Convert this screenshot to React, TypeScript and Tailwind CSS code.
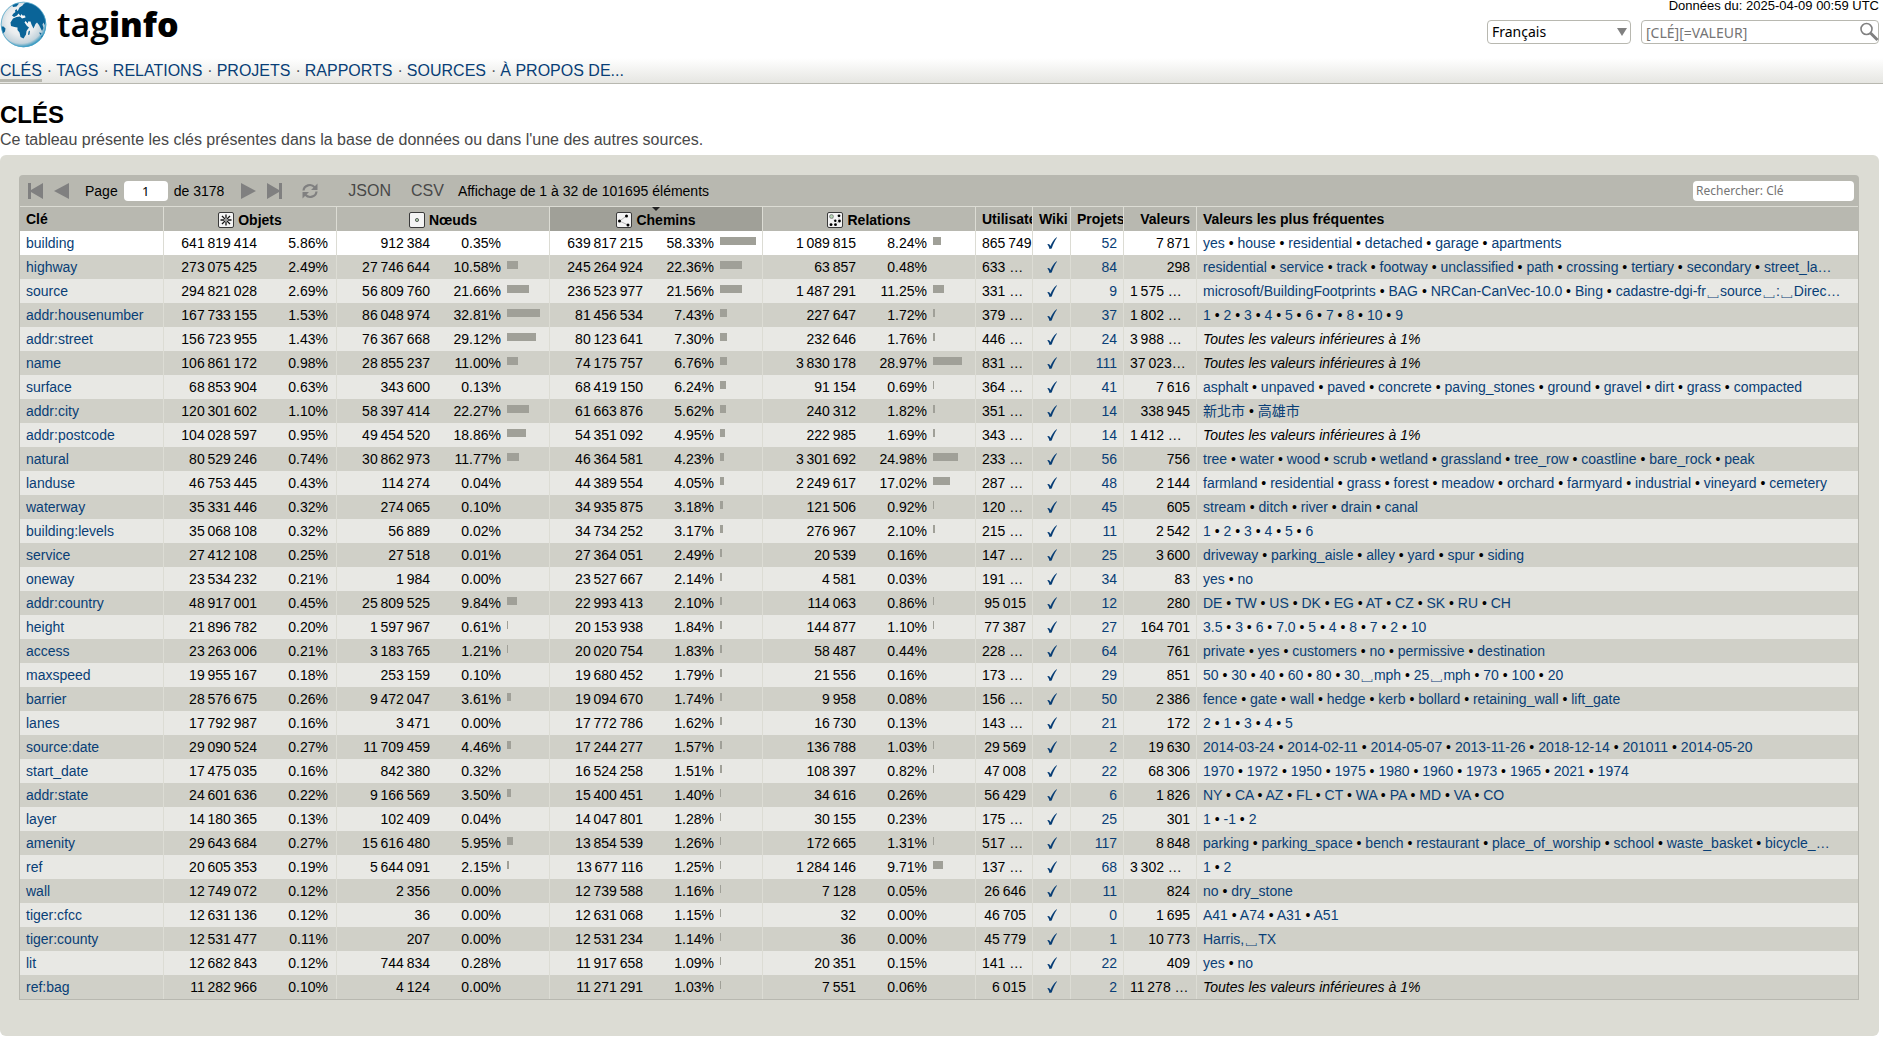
import React from "react";

type Row = {
  key: string;
  all: [string, string];
  nodes: [string, string];
  ways: [string, string];
  relations: [string, string];
  users: string;
  projects: string;
  values: string;
  top: string;
};

const SOURCE = `building|641 819 414|5.86|912 384|0.35|639 817 215|58.33|1 089 815|8.24|865 749|52|7 871|yes,house,residential,detached,garage,apartments
highway|273 075 425|2.49|27 746 644|10.58|245 264 924|22.36|63 857|0.48|633 …|84|298|residential,service,track,footway,unclassified,path,crossing,tertiary,secondary,street_la…
source|294 821 028|2.69|56 809 760|21.66|236 523 977|21.56|1 487 291|11.25|331 …|9|1 575 …|microsoft/BuildingFootprints,BAG,NRCan-CanVec-10.0,Bing,cadastre-dgi-fr␣source␣:␣Direc…
addr:housenumber|167 733 155|1.53|86 048 974|32.81|81 456 534|7.43|227 647|1.72|379 …|37|1 802 …|1,2,3,4,5,6,7,8,10,9
addr:street|156 723 955|1.43|76 367 668|29.12|80 123 641|7.30|232 646|1.76|446 …|24|3 988 …|
name|106 861 172|0.98|28 855 237|11.00|74 175 757|6.76|3 830 178|28.97|831 …|111|37 023…|
surface|68 853 904|0.63|343 600|0.13|68 419 150|6.24|91 154|0.69|364 …|41|7 616|asphalt,unpaved,paved,concrete,paving_stones,ground,gravel,dirt,grass,compacted
addr:city|120 301 602|1.10|58 397 414|22.27|61 663 876|5.62|240 312|1.82|351 …|14|338 945|新北市,高雄市
addr:postcode|104 028 597|0.95|49 454 520|18.86|54 351 092|4.95|222 985|1.69|343 …|14|1 412 …|
natural|80 529 246|0.74|30 862 973|11.77|46 364 581|4.23|3 301 692|24.98|233 …|56|756|tree,water,wood,scrub,wetland,grassland,tree_row,coastline,bare_rock,peak
landuse|46 753 445|0.43|114 274|0.04|44 389 554|4.05|2 249 617|17.02|287 …|48|2 144|farmland,residential,grass,forest,meadow,orchard,farmyard,industrial,vineyard,cemetery
waterway|35 331 446|0.32|274 065|0.10|34 935 875|3.18|121 506|0.92|120 …|45|605|stream,ditch,river,drain,canal
building:levels|35 068 108|0.32|56 889|0.02|34 734 252|3.17|276 967|2.10|215 …|11|2 542|1,2,3,4,5,6
service|27 412 108|0.25|27 518|0.01|27 364 051|2.49|20 539|0.16|147 …|25|3 600|driveway,parking_aisle,alley,yard,spur,siding
oneway|23 534 232|0.21|1 984|0.00|23 527 667|2.14|4 581|0.03|191 …|34|83|yes,no
addr:country|48 917 001|0.45|25 809 525|9.84|22 993 413|2.10|114 063|0.86|95 015|12|280|DE,TW,US,DK,EG,AT,CZ,SK,RU,CH
height|21 896 782|0.20|1 597 967|0.61|20 153 938|1.84|144 877|1.10|77 387|27|164 701|3.5,3,6,7.0,5,4,8,7,2,10
access|23 263 006|0.21|3 183 765|1.21|20 020 754|1.83|58 487|0.44|228 …|64|761|private,yes,customers,no,permissive,destination
maxspeed|19 955 167|0.18|253 159|0.10|19 680 452|1.79|21 556|0.16|173 …|29|851|50,30,40,60,80,30␣mph,25␣mph,70,100,20
barrier|28 576 675|0.26|9 472 047|3.61|19 094 670|1.74|9 958|0.08|156 …|50|2 386|fence,gate,wall,hedge,kerb,bollard,retaining_wall,lift_gate
lanes|17 792 987|0.16|3 471|0.00|17 772 786|1.62|16 730|0.13|143 …|21|172|2,1,3,4,5
source:date|29 090 524|0.27|11 709 459|4.46|17 244 277|1.57|136 788|1.03|29 569|2|19 630|2014-03-24,2014-02-11,2014-05-07,2013-11-26,2018-12-14,201011,2014-05-20
start_date|17 475 035|0.16|842 380|0.32|16 524 258|1.51|108 397|0.82|47 008|22|68 306|1970,1972,1950,1975,1980,1960,1973,1965,2021,1974
addr:state|24 601 636|0.22|9 166 569|3.50|15 400 451|1.40|34 616|0.26|56 429|6|1 826|NY,CA,AZ,FL,CT,WA,PA,MD,VA,CO
layer|14 180 365|0.13|102 409|0.04|14 047 801|1.28|30 155|0.23|175 …|25|301|1,-1,2
amenity|29 643 684|0.27|15 616 480|5.95|13 854 539|1.26|172 665|1.31|517 …|117|8 848|parking,parking_space,bench,restaurant,place_of_worship,school,waste_basket,bicycle_…
ref|20 605 353|0.19|5 644 091|2.15|13 677 116|1.25|1 284 146|9.71|137 …|68|3 302 …|1,2
wall|12 749 072|0.12|2 356|0.00|12 739 588|1.16|7 128|0.05|26 646|11|824|no,dry_stone
tiger:cfcc|12 631 136|0.12|36|0.00|12 631 068|1.15|32|0.00|46 705|0|1 695|A41,A74,A31,A51
tiger:county|12 531 477|0.11|207|0.00|12 531 234|1.14|36|0.00|45 779|1|10 773|Harris;␣TX
lit|12 682 843|0.12|744 834|0.28|11 917 658|1.09|20 351|0.15|141 …|22|409|yes,no
ref:bag|11 282 966|0.10|4 124|0.00|11 271 291|1.03|7 551|0.06|6 015|2|11 278 …|`;

// Thousands are grouped with a thin space.
const thin = (s: string) => s.replace(/(\d) (?=\d)/g, "$1\u2009");

const ROWS: Row[] = SOURCE.split("\n").map((line) => {
  const f = line.split("|");
  return {
    key: f[0],
    all: [thin(f[1]), f[2]],
    nodes: [thin(f[3]), f[4]],
    ways: [thin(f[5]), f[6]],
    relations: [thin(f[7]), f[8]],
    users: thin(f[9]),
    projects: f[10],
    values: thin(f[11]),
    top: f[12],
  };
});

const NAV = ["CLÉS", "TAGS", "RELATIONS", "PROJETS", "RAPPORTS", "SOURCES", "À PROPOS DE..."];

const CELL = "h-6 overflow-hidden border-r border-[#dcdcd4] px-1.5 py-0 whitespace-nowrap";
const LINK = "text-[#083e76]";

function Globe() {
  return (
    <svg viewBox="0 0 48 48" className="size-12" aria-hidden="true">
      <defs>
        <radialGradient id="sea" cx="0.45" cy="0.42" r="0.58">
          <stop offset="0" stopColor="#ffffff" />
          <stop offset="0.55" stopColor="#e9ecee" />
          <stop offset="0.85" stopColor="#c3d3dc" />
          <stop offset="1" stopColor="#2f94bd" />
        </radialGradient>
        <clipPath id="disc">
          <circle cx="23.5" cy="24.5" r="22.5" />
        </clipPath>
      </defs>
      <circle cx="23.5" cy="24.5" r="22.8" fill="url(#sea)" />
      <g clipPath="url(#disc)" fill="#0a6498">
        <path d="M24 3.5 27 2.5 34 4.5 40 9 44.5 16 46 22 44.5 25 43.5 22.5 42.5 24.5 43.5 28 42 31 40.5 28 39 25 37 22.5 35.5 24 33.5 28.5 31.5 24.5 30.5 21.5 28 21.5 28 23.5 25.5 21 24.5 22.5 27 26 29 27.5 26.5 31 26 34.5 23.5 38.5 20.5 37 19.5 32.5 17.5 30 17.5 27.5 14.5 27 11 26 10.5 22.5 13 18.5 16.5 17 20 16.5 22 18.5 25.5 17.5 25 15.5 22.5 15.5 21.5 14 20.5 16 18.5 13.5 17 15.5 14 17 12 15.5 13.5 13.5 15.5 12 18 10.5 19.5 7.5 22.5 5.5Z" />
        <path d="M15 10.5 16.5 9 17.5 11.5 15.5 12.5ZM12 4.5 16 3 19 3.5 16.5 6.5 13 7ZM28.5 31.5 30 30.5 29.5 34.5 28 35ZM39 32.5 41.5 33 40.5 35ZM1 26.5 3.5 26.5 5.5 28.5 5 31.5 2.5 34ZM41.5 36 44 34 42.5 38.5 40.5 39.5Z" />
      </g>
      <circle cx="23.5" cy="24.5" r="22.3" fill="none" stroke="#4aa5cb" strokeOpacity="0.7" />
    </svg>
  );
}

function Box({ children }: { children: React.ReactNode }) {
  return (
    <svg viewBox="0 0 16 16" className="size-4" aria-hidden="true">
      <rect x="0.5" y="0.5" width="15" height="15" rx="1.5" fill="#f4f4f4" stroke="#3a3a3a" />
      {children}
    </svg>
  );
}

const ICONS = {
  all: (
    <Box>
      <path d="M8 2.5V6.5M8 9.5V13.5M2.5 8H6.5M9.5 8H13.5M4 4 6.9 6.9M9.1 9.1 12 12M12 4 9.1 6.9M6.9 9.1 4 12" stroke="#111" strokeWidth="1.3" />
      <circle cx="8" cy="8" r="1.3" fill="#999" />
    </Box>
  ),
  nodes: (
    <Box>
      <circle cx="8" cy="8" r="1.6" fill="#a8cba8" stroke="#444" strokeWidth="0.8" />
    </Box>
  ),
  ways: (
    <Box>
      <path d="M10.5 4 3.5 9 12 13" fill="none" stroke="#aaa" strokeWidth="0.8" />
      <circle cx="10.5" cy="4" r="1.5" />
      <circle cx="3.5" cy="9" r="1.5" />
      <circle cx="12" cy="13" r="1.5" />
    </Box>
  ),
  relations: (
    <Box>
      <path d="M4.5 4.5 8 10M12 4V12M12 8.5 9 12.5H4" fill="none" stroke="#aaa" strokeWidth="0.7" strokeDasharray="1 1" />
      <circle cx="4.5" cy="4.5" r="1.9" fill="#b5d6b5" stroke="#777" strokeWidth="0.8" />
      <circle cx="12" cy="3.8" r="1.4" />
      <circle cx="8.3" cy="8.8" r="1.2" />
      <circle cx="12.5" cy="9" r="1.4" />
      <circle cx="4" cy="12.7" r="1.4" />
      <circle cx="8.5" cy="12.7" r="1.4" />
    </Box>
  ),
};

function Share({ value, bar }: { value: [string, string]; bar?: boolean }) {
  const width = Math.min(36, Math.round(Number(value[1])));
  return (
    <td className={CELL}>
      <div className="flex">
        <span className="w-[87px] shrink-0 text-right">{value[0]}</span>
        <span className="w-[71px] shrink-0 text-right">{value[1]}%</span>
        {bar && <span className="mt-1.5 ml-1.5 h-2 bg-[#a0a098]" style={{ width }} />}
      </div>
    </td>
  );
}

// Shortened numbers keep to the left edge, whole ones to the right.
function Count({ value }: { value: string }) {
  return <td className={`${CELL} ${value.endsWith("…") ? "text-left" : "text-right"}`}>{value}</td>;
}

function TopValues({ list }: { list: string }) {
  if (!list) return <i>Toutes les valeurs inférieures à 1%</i>;
  return (
    <>
      {list.split(",").map((v, i) => (
        <React.Fragment key={v}>
          {i > 0 && " • "}
          <a href="#" className={LINK}>
            {v.replace(";", ",")}
          </a>
        </React.Fragment>
      ))}
    </>
  );
}

function IconHead({ icon, label, sorted }: { icon: keyof typeof ICONS; label: string; sorted?: boolean }) {
  return (
    <th scope="col" aria-sort={sorted ? "descending" : undefined} className={sorted ? `${CELL} relative bg-[#a0a098]` : CELL}>
      {sorted && (
        <span className="absolute top-0 left-1/2 -translate-x-1/2 border-x-4 border-t-4 border-x-transparent border-t-[#222]" />
      )}
      <span className="flex items-center justify-center gap-1 pt-0.5 leading-[22px]">
        {ICONS[icon]}
        {label}
      </span>
    </th>
  );
}

const TOOL = "flex size-4 items-center justify-center text-[#808080]";

function Toolbar() {
  return (
    <div className="flex h-[31px] items-center rounded-t bg-[#b8b8b0] px-[5px]">
      <div className="flex items-center gap-[10px] pl-1">
        <button type="button" aria-label="Première page" className={TOOL}>
          <svg viewBox="0 0 16 16" className="size-4" fill="currentColor"><path d="M0 0H3V7L15 0V16L3 9V16H0Z" /></svg>
        </button>
        <button type="button" aria-label="Page précédente" className={TOOL}>
          <svg viewBox="0 0 16 16" className="size-4" fill="currentColor"><path d="M15 0V16L0 8Z" /></svg>
        </button>
      </div>
      <label className="ml-[15px] flex items-center gap-1.5">
        Page
        <input defaultValue="1" className="h-5 w-11 rounded-sm bg-white text-center font-['Noto_Sans',sans-serif] text-[13px]" />
        de 3178
      </label>
      <div className="ml-4 flex items-center gap-[10px]">
        <button type="button" aria-label="Page suivante" className={TOOL}>
          <svg viewBox="0 0 16 16" className="size-4" fill="currentColor"><path d="M1 0V16L16 8Z" /></svg>
        </button>
        <button type="button" aria-label="Dernière page" className={TOOL}>
          <svg viewBox="0 0 16 16" className="size-4" fill="currentColor"><path d="M16 0H13V7L1 0V16L13 9V16H16Z" /></svg>
        </button>
      </div>
      <button type="button" aria-label="Recharger" className={`${TOOL} ml-5`}>
        <svg viewBox="0 0 16 16" className="size-4" fill="none" stroke="currentColor" strokeWidth="2.2">
          <path d="M1.5 7.5A6.3 6 0 0 1 12.6 4.2M14.5 8.5A6.3 6 0 0 1 3.4 11.8" />
          <path d="M15.5 0.5V7H9ZM0.5 15.5V9H7Z" fill="currentColor" stroke="none" />
        </svg>
      </button>
      <div className="ml-[30px] flex gap-5 text-base text-[#484848]">
        <a href="#">JSON</a>
        <a href="#">CSV</a>
      </div>
      <span className="ml-[14px]">Affichage de 1 à 32 de 101695 éléments</span>
      <input
        aria-label="Rechercher une clé"
        placeholder="Rechercher: Clé"
        className="ml-auto h-5 w-[161px] rounded-sm bg-white px-[3px] font-['Noto_Sans',sans-serif] text-xs placeholder:text-[#757575]"
      />
    </div>
  );
}

export default function App() {
  return (
    <div className="bg-white pr-1 pb-1 font-['Liberation_Sans','Noto_Sans_CJK_TC',Arial,sans-serif] text-sm leading-6 text-black">
      <header className="-mr-1 h-[84px] border-b border-[#b8b8b0] bg-linear-to-b from-white from-70% to-[#e6e6e2]">
        <div className="flex h-[63px] justify-between">
          <a href="#" className="flex items-start gap-[9px] font-['Open_Sans','Noto_Sans',sans-serif] text-[34px] leading-[48px]">
            <Globe />
            <span>
              <span className="font-semibold">tag</span>
              <span className="font-extrabold">info</span>
            </span>
          </a>
          <div className="mr-1 flex flex-col items-end">
            <div className="-mt-1.5 mb-0.5 text-[13px] leading-6">Données du: 2025-04-09 00:59 UTC</div>
            <div className="flex gap-[10px] font-['Noto_Sans',sans-serif]">
              <div className="relative">
                <select aria-label="Langue" className="h-6 w-36 appearance-none rounded border border-[#b8b8b0] bg-white px-1 text-sm leading-5">
                  <option>Français</option>
                </select>
                <span className="pointer-events-none absolute top-2 right-1 border-x-5 border-t-8 border-x-transparent border-t-[#808080]" />
              </div>
              <div className="relative">
                <input
                  aria-label="Recherche"
                  placeholder="[CLÉ][=VALEUR]"
                  className="h-6 w-[238px] rounded border border-[#b8b8b0] bg-white px-1 text-sm placeholder:text-[#757575]"
                />
                <button type="button" aria-label="Chercher" className="absolute top-0.5 right-0 text-[#808080]">
                  <svg viewBox="0 0 20 20" className="size-5" fill="none" stroke="currentColor">
                    <circle cx="7.5" cy="7" r="5.5" strokeWidth="1.6" />
                    <path d="M11.5 11 18.5 18" strokeWidth="3" />
                  </svg>
                </button>
              </div>
            </div>
          </div>
        </div>
        <nav className="flex text-base leading-4">
          {NAV.map((item, i) => (
            <React.Fragment key={item}>
              {i > 0 && <span className="pr-1 pl-[5px] text-[#555]">·</span>}
              <a href="#" className={i === 0 ? `${LINK} border-b-3 border-[#b8b8b0]` : LINK} aria-current={i === 0 ? "page" : undefined}>
                {item}
              </a>
            </React.Fragment>
          ))}
        </nav>
      </header>

      <main>
        <h1 className="mt-[15px] text-2xl leading-[31px] font-bold">CLÉS</h1>
        <p className="mb-1.5 text-base leading-[19px] text-[#484848]">
          Ce tableau présente les clés présentes dans la base de données ou dans l'une des autres sources.
        </p>

        <section className="rounded-md bg-[#dcdcd4] pt-5 pr-5 pb-9 pl-[19px]">
          <Toolbar />
          <div className="border-x border-b border-[#b8b8b0]">
            <table className="w-full table-fixed border-separate border-spacing-0">
              <colgroup>
                <col className="w-36" />
                <col className="w-[173px]" />
                <col className="w-[213px]" />
                <col className="w-[213px]" />
                <col className="w-[213px]" />
                <col className="w-[57px]" />
                <col className="w-[38px]" />
                <col className="w-[53px]" />
                <col className="w-[73px]" />
                <col />
              </colgroup>
              <thead>
                <tr className="bg-[#b8b8b0] [&>th]:border-t">
                  <th scope="col" className={`${CELL} text-left`}>Clé</th>
                  <IconHead icon="all" label="Objets" />
                  <IconHead icon="nodes" label="Nœuds" />
                  <IconHead icon="ways" label="Chemins" sorted />
                  <IconHead icon="relations" label="Relations" />
                  <th scope="col" className={`${CELL} text-left`}>Utilisateurs</th>
                  <th scope="col" className={`${CELL} text-left`}>Wiki</th>
                  <th scope="col" className={`${CELL} text-left`}>Projets</th>
                  <th scope="col" className={`${CELL} text-right`}>Valeurs</th>
                  <th scope="col" className={`${CELL} border-r-0 text-left`}>Valeurs les plus fréquentes</th>
                </tr>
              </thead>
              <tbody>
                {ROWS.map((r, i) => (
                  <tr key={r.key} className={i === 0 ? "bg-white" : i % 2 ? "bg-[#d0d0c8]" : "bg-[#e8e8e4]"}>
                    <td className={CELL}>
                      <a href="#" className={LINK}>{r.key}</a>
                    </td>
                    <Share value={r.all} />
                    <Share value={r.nodes} bar />
                    <Share value={r.ways} bar />
                    <Share value={r.relations} bar />
                    <Count value={r.users} />
                    <td className={CELL}>
                      <a href="#" aria-label={`Wiki : ${r.key}`} className={`${LINK} flex h-6 items-center justify-center`}>
                        <svg viewBox="0 0 10 12" className="h-3 w-2.5" fill="currentColor">
                          <path d="M0.2 7.4C1.4 6.4 2.6 6.8 3.5 9 4.8 5.6 6.8 2.4 9.6 0.2L10 0.6C7.8 4 6 7.4 4.7 11.4L2.5 12C2 9.8 1.4 8.2 0.2 7.4Z" />
                        </svg>
                      </a>
                    </td>
                    <td className={`${CELL} text-right`}>
                      <a href="#" className={LINK}>{r.projects}</a>
                    </td>
                    <Count value={r.values} />
                    <td className={`${CELL} border-r-0`}>
                      <TopValues list={r.top} />
                    </td>
                  </tr>
                ))}
              </tbody>
            </table>
          </div>
        </section>
      </main>
    </div>
  );
}
